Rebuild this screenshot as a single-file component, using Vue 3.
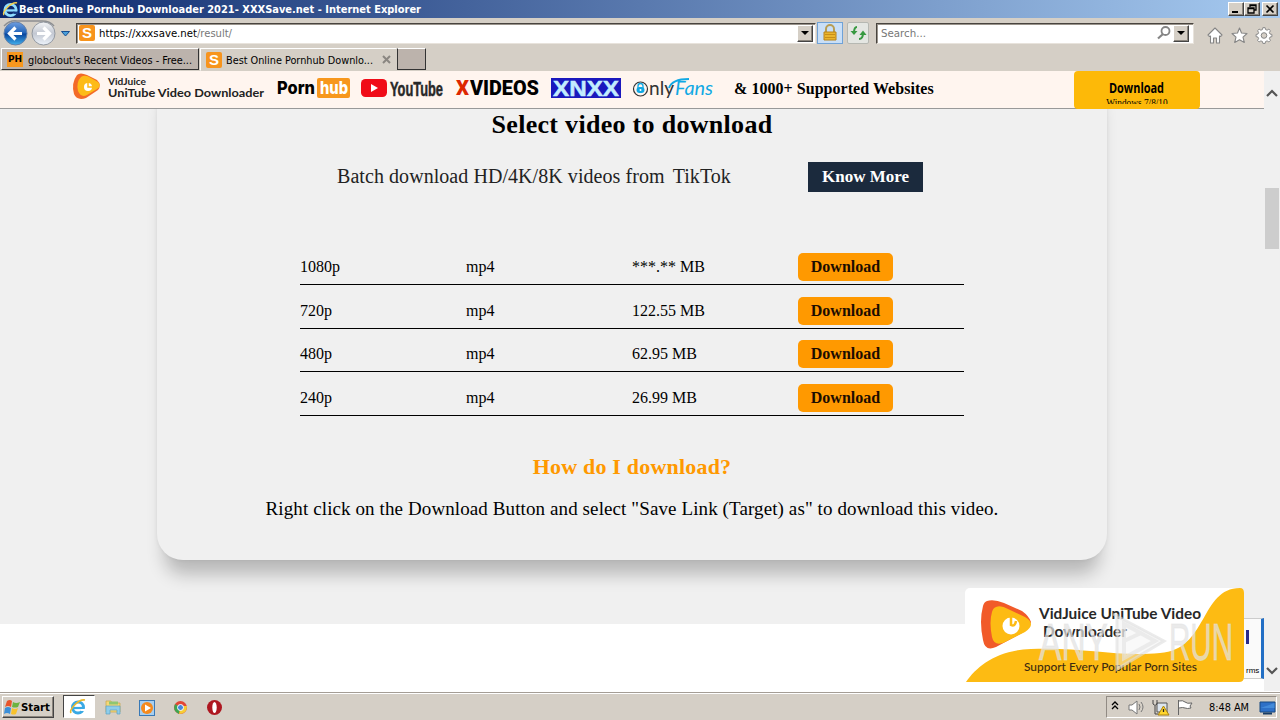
<template>
  <div class="screen">
    <header class="titlebar">
      <svg class="ie" viewBox="0 0 18 18">
        <circle cx="9" cy="9.5" r="6" fill="none" stroke="#8edcff" stroke-width="3" />
        <path d="M4 10h11" stroke="#8edcff" stroke-width="2.4" />
        <path d="M12 11.2h5v2.5h-5z" fill="#173c86" />
        <path d="M2 15C0 12 9 1 16 2" fill="none" stroke="#f7cf4e" stroke-width="1.5" />
      </svg>
      <svg class="title-text" width="404" height="17">
        <text x="0" y="12" textLength="402" lengthAdjust="spacingAndGlyphs">Best Online Pornhub Downloader 2021- XXXSave.net - Internet Explorer</text>
      </svg>
      <div class="win-buttons">
        <span class="bevel win"><svg viewBox="0 0 14 12"><path d="M3 9h6" stroke="#000" stroke-width="2" /></svg></span>
        <span class="bevel win"><svg viewBox="0 0 14 12"><path d="M5 4V2h6v5H9M5 2.5h6M3 5h6v5H3zM3 5.5h6" fill="none" stroke="#000" stroke-width="1.3" /></svg></span>
        <span class="bevel win last"><svg viewBox="0 0 14 12"><path d="M3.5 2.5l7 7M10.5 2.5l-7 7" stroke="#000" stroke-width="1.7" /></svg></span>
      </div>
    </header>

    <div class="toolbar">
      <svg class="nav" width="74" height="30" viewBox="0 0 74 30">
        <defs>
          <linearGradient id="back" x1="0" y1="0" x2="0" y2="1">
            <stop offset="0" stop-color="#6f9ee0" /><stop offset=".48" stop-color="#2163b8" />
            <stop offset=".52" stop-color="#08449c" /><stop offset="1" stop-color="#43b2ee" />
          </linearGradient>
          <linearGradient id="fwd" x1="0" y1="0" x2="0" y2="1">
            <stop offset="0" stop-color="#f4f5f7" /><stop offset=".5" stop-color="#c3c8d2" /><stop offset="1" stop-color="#edf3fa" />
          </linearGradient>
        </defs>
        <path d="M4 8Q10 2 17 3H42Q50 3 54 8" fill="none" stroke="#8d8f92" stroke-width="1.5" />
        <circle cx="15.5" cy="15.5" r="11.5" fill="url(#back)" stroke="#6681a9" />
        <circle cx="43.5" cy="15.5" r="11.5" fill="url(#fwd)" stroke="#9298a1" />
        <path d="M22 15.5H10M15.500 9.500l-6 6 6 6" fill="none" stroke="#fff" stroke-width="3.200" />
        <path d="M37 15.500H49M43.500 9.500l6 6-6 6" fill="none" stroke="#fff" stroke-width="3.200" />
        <path d="M61.500 13.500h8l-4 4.500z" fill="#4aa0da" stroke="#174f91" />
      </svg>
      <div class="field address">
        <span class="s-icon">S</span>
        <svg class="url" width="140" height="18">
          <text x="0" y="13" textLength="98" lengthAdjust="spacingAndGlyphs">https://xxxsave.net</text>
          <text x="98" y="13" class="dim" textLength="35" lengthAdjust="spacingAndGlyphs">/result/</text>
        </svg>
        <span class="bevel drop"></span>
      </div>
      <span class="tool lock">
        <svg width="16" height="18" viewBox="0 0 16 18">
          <path d="M4 8V5a4 4 0 0 1 8 0v3" fill="none" stroke="#b79d54" stroke-width="2" />
          <path d="M2 8h12v8H2z" fill="#eab52d" stroke="#b8821b" /><path d="M3 10.500h10M3 13.500h10" stroke="#c88e18" />
        </svg>
      </span>
      <span class="tool refresh">
        <svg width="18" height="18" viewBox="0 0 18 18" fill="none" stroke="#379940" stroke-width="2">
          <path d="M8 3Q5 3 5 9" /><path d="M1.500 7h7L5 11z" fill="#379940" stroke="none" />
          <path d="M10 15q4 0 4-6" /><path d="M10.500 11h7L14 6.500z" fill="#379940" stroke="none" />
        </svg>
      </span>
      <div class="field search">
        <svg class="url" width="60" height="18"><text x="0" y="13" class="dim" textLength="45" lengthAdjust="spacingAndGlyphs">Search...</text></svg>
        <svg class="glass" width="15" height="16" viewBox="0 0 15 16"><circle cx="8.500" cy="6" r="4" fill="none" stroke="#858585" stroke-width="1.800" /><path d="M6 9l-5 4.500" stroke="#858585" stroke-width="2.200" /></svg>
        <span class="bevel drop"></span>
      </div>
      <svg class="tools" width="70" height="20" viewBox="0 0 70 20">
        <g fill="#fff" stroke="#858585" stroke-width="1.100" stroke-linejoin="round">
          <path d="M3 10l7-7 7 7-1.500 1.500L14.500 11v7h-3v-5h-3v5h-3v-7l-1 .5z" />
          <path d="M34.500 3l2 5 5.500.5-4 3.700 1.300 5.300-4.800-2.800-4.800 2.800 1.300-5.300-4-3.700 5.500-.5z" />
          <path transform="translate(59 10.500) scale(.87) translate(-59 -11)" d="M57.700 2h2.600l.5 2.200 1.800.7 2-1.200 1.800 1.800-1.200 2 .7 1.800 2.200.5v2.500l-2.200.5-.7 1.800 1.200 2-1.800 1.800-2-1.200-1.800.7-.5 2.200h-2.600l-.5-2.200-1.800-.7-2 1.200-1.800-1.800 1.200-2-.7-1.800-2.200-.5V9.800l2.200-.5.7-1.800-1.200-2 1.800-1.800 2 1.200 1.800-.7z" />
        </g>
        <circle cx="59" cy="10.500" r="2.800" fill="#d5cfc6" stroke="#858585" />
      </svg>
    </div>

    <nav class="tabs">
      <div class="tab first">
        <span class="ph">PH</span>
        <svg width="168" height="18"><text x="0" y="13" textLength="164" lengthAdjust="spacingAndGlyphs">globclout's Recent Videos - Free...</text></svg>
      </div>
      <div class="tab active">
        <span class="s-icon">S</span>
        <svg width="148" height="18"><text x="0" y="13" textLength="147" lengthAdjust="spacingAndGlyphs">Best Online Pornhub Downlo...</text></svg>
        <svg class="close" width="9" height="9" viewBox="0 0 9 9"><path d="M1 1l7 7M8 1L1 8" stroke="#8a8681" stroke-width="2" /></svg>
      </div>
      <div class="tab blank"></div>
    </nav>

    <main class="page">
      <div class="view">
        <div class="banner">
          <svg class="brands" width="660" height="37" viewBox="0 0 660 37">
            <path d="M5 4Q8 1 15 4L25 9Q30 14 26 19L14 27Q5 30 2 23Q-1 12 5 4Z" fill="#f36a28" />
            <path d="M9 6Q13 3 19 7L26 11Q30 15 25 18L15 24Q9 27 6 20Q4 11 9 6Z" fill="#fdbb18" />
            <circle cx="16" cy="16" r="4" fill="#fff" /><path d="M16 11v5h4" fill="none" stroke="#fdbb18" stroke-width="1.500" />
            <g class="lato" fill="#222">
              <text x="36" y="14" font-size="10" textLength="38" lengthAdjust="spacingAndGlyphs">VidJuice</text>
              <text x="36" y="25.500" font-size="12" textLength="156" lengthAdjust="spacingAndGlyphs">UniTube Video Downloader</text>
            </g>
            <g class="logo-sans">
              <text class="heavy" x="205" y="23" font-size="18" textLength="38" lengthAdjust="spacingAndGlyphs">Porn</text>
              <rect x="245" y="7" width="33" height="20" rx="2" fill="#f7971d" />
              <text class="heavy" x="248" y="23" font-size="18" fill="#fff" textLength="28" lengthAdjust="spacingAndGlyphs">hub</text>
              <rect x="289" y="8" width="26" height="18" rx="4.500" fill="#f00c18" />
              <path d="M299 13v8l7-4z" fill="#fff" />
              <text x="318" y="24.500" font-size="20" fill="#282828" stroke="#282828" stroke-width=".5" textLength="53" lengthAdjust="spacingAndGlyphs">YouTube</text>
              <text class="black" x="384" y="24" font-size="20" fill="#de2600" textLength="13" lengthAdjust="spacingAndGlyphs">X</text>
              <text class="black" x="398" y="24" font-size="20" textLength="69" lengthAdjust="spacingAndGlyphs">VIDEOS</text>
              <rect x="479" y="7" width="70" height="20" fill="#1b18bd" />
              <text x="481" y="25" font-size="22" fill="#c3ecff" stroke="#c3ecff" stroke-width=".5" textLength="66" lengthAdjust="spacingAndGlyphs">XNXX</text>
            </g>
            <circle cx="568.500" cy="18" r="7" fill="none" stroke="#333" stroke-width="1.200" />
            <path d="M566 17v-2a2.500 2.500 0 0 1 5 0v2" fill="none" stroke="#11a8e4" stroke-width="1.300" />
            <rect x="564.500" y="16" width="8" height="6" rx="3" fill="#11a8e4" /><circle cx="568.500" cy="19" r="1" fill="#fff" />
            <text class="only" x="577" y="24" font-size="19" fill="#333" textLength="25" lengthAdjust="spacingAndGlyphs">nly</text>
            <text class="fans" x="603" y="24" font-size="20" fill="#12a9e4" textLength="38" lengthAdjust="spacingAndGlyphs">Fans</text>
            <path d="M597 17q3-9 20-9" fill="none" stroke="#12a9e4" stroke-width="2" />
          </svg>
          <strong class="supported">&amp; 1000+ Supported Websites</strong>
          <div class="top-download">
            <svg width="56" height="20"><text x="0" y="14" textLength="55" lengthAdjust="spacingAndGlyphs">Download</text></svg>
            <span>Windows 7/8/10</span>
          </div>
        </div>

        <div class="backdrop">
          <section class="card">
            <h1>Select video to download</h1>
            <div class="batch">
              <p>Batch download HD/4K/8K videos from <span>TikTok</span></p>
              <a class="know">Know More</a>
            </div>
            <div class="rows">
              <div v-for="file in files" :key="file.quality" class="row">
                <span>{{ file.quality }}</span>
                <span>mp4</span>
                <span>{{ file.size }}</span>
                <a class="download">Download</a>
              </div>
            </div>
            <h2>How do I download?</h2>
            <p class="hint">Right click on the Download Button and select "Save Link (Target) as" to download this video.</p>
          </section>
        </div>

        <div class="captcha"><b></b><span>rms</span></div>
        <svg class="promo" width="280" height="95" viewBox="0 0 280 95">
          <rect width="279" height="94" rx="5" fill="#fff" />
          <path d="M1 94C12 78 32 62 66 61C120 59 150 69 195 65C243 62 235 0 275 0Q279 0 279 5V89Q279 94 274 94Z" fill="#fdbb13" />
          <path d="M22 13Q29 11 39 15L57 23Q64 28 66 34Q64 41 57 45L31 59Q20 64 18 52Q14 33 18 18Q19 14 22 13Z" fill="#f15a29" />
          <path d="M31 19Q36 17 43 21L60 29Q72 36 60 44L38 55Q29 58 27 49Q24 34 27 24Q28 20 31 19Z" fill="#fdbb13" />
          <circle cx="46" cy="38" r="8.500" fill="#fff" /><path d="M38 28h8v9q4 2 5-4" fill="none" stroke="#fdbb13" stroke-width="2.500" />
          <g class="promo-title" fill="#282828">
            <text x="74" y="31" textLength="162" lengthAdjust="spacingAndGlyphs">VidJuice UniTube Video</text>
            <text x="78" y="49" textLength="84" lengthAdjust="spacingAndGlyphs">Downloader</text>
          </g>
          <text class="promo-sub" x="59" y="83" textLength="173" lengthAdjust="spacingAndGlyphs">Support Every Popular Porn Sites</text>
        </svg>
        <svg class="watermark" width="200" height="65" viewBox="0 0 200 65">
          <g fill="#e2e2e2" fill-opacity=".72" stroke="#e2e2e2" stroke-opacity=".5">
            <text x="3" y="50" textLength="69" lengthAdjust="spacingAndGlyphs">ANY</text>
            <text x="133" y="50" textLength="64" lengthAdjust="spacingAndGlyphs">RUN</text>
          </g>
          <path d="M77 4l51 27-47 28V4" fill="#eee" fill-opacity=".4" stroke="#ddd" stroke-opacity=".6" stroke-width="3" />
          <path d="M88 14v34l31-17zM88 31l17-8" fill="#fff" fill-opacity=".15" stroke="#e4e4e4" stroke-opacity=".65" stroke-width="4" />
        </svg>
      </div>

      <div class="scrollbar">
        <svg width="12" height="8" viewBox="0 0 12 8"><path d="M1 7l5-5 5 5" fill="none" stroke="#555" stroke-width="2.200" /></svg>
        <span class="thumb"></span>
        <svg width="12" height="8" viewBox="0 0 12 8"><path d="M1 1l5 5 5-5" fill="none" stroke="#555" stroke-width="2.200" /></svg>
      </div>
    </main>

    <footer class="taskbar">
      <div class="bevel start">
        <svg width="16" height="16" viewBox="0 0 16 16">
          <path d="M3 2q3-2 5 0L7 8Q4 6 1 8z" fill="#e9552b" /><path d="M9 3q3 2 7 0l-2 5q-3 1-6 0z" fill="#6cb33f" />
          <path d="M1 9q3-2 6 0l-1 6q-3-2-6 0z" fill="#3c8fd8" /><path d="M8 9q3 2 6 0l-2 6q-2 1-5 0z" fill="#f8c22c" />
        </svg>
        <svg width="30" height="16"><text x="0" y="12" textLength="29" lengthAdjust="spacingAndGlyphs">Start</text></svg>
      </div>
      <div class="task-ie">
        <svg width="18" height="18" viewBox="0 0 18 18">
          <circle cx="9" cy="9.500" r="5.500" fill="none" stroke="#3aa9e4" stroke-width="3" />
          <path d="M4 10h11" stroke="#3aa9e4" stroke-width="2.200" /><path d="M12 11h5v2h-5z" fill="#fff" />
          <path d="M2 15C0 12 9 1 16 2" fill="none" stroke="#eab92d" stroke-width="1.600" />
        </svg>
      </div>
      <svg class="launch" width="120" height="20" viewBox="0 0 120 20">
        <path d="M2 4h5l1 2h8v9H2z" fill="#f4d878" stroke="#c9a545" stroke-width=".7" />
        <path d="M5 4.500h9v3H5z" fill="#8fc670" /><path d="M2 9h14v8h-3v-4H6v4H2z" fill="#8ecdea" stroke="#5da2c3" stroke-width=".7" />
        <rect x="35.500" y="3.500" width="15" height="15" fill="#a7cff0" stroke="#3979b6" />
        <circle cx="43" cy="11" r="6" fill="#f58a1d" /><path d="M41 7.500v7l6-3.500z" fill="#fff" />
        <circle cx="76.500" cy="10.500" r="6.500" fill="#e24635" />
        <path d="M76.500 10.500L71 7q-3 7 4 10z" fill="#3da650" /><path d="M76.500 10.500L75 17q8 0 8-8h-6z" fill="#f7ce36" />
        <circle cx="76.500" cy="10.500" r="3" fill="#4687dc" stroke="#fff" />
        <circle cx="110.500" cy="10.500" r="7.500" fill="#ae1720" /><ellipse cx="110.500" cy="10.500" rx="2.200" ry="5.500" fill="#fff" />
      </svg>
      <div class="tray">
        <svg width="90" height="20" viewBox="0 0 90 20">
          <path d="M5 8l3-3 3 3M5 12l3-3 3 3" fill="none" stroke="#000" stroke-width="1.300" />
          <path d="M22 8h3l5-4v13l-5-4h-3z" fill="#fff" stroke="#777" />
          <path d="M32 7q2 3 0 6M34 5q4 5 0 10" fill="none" stroke="#777" />
          <path d="M50 6h10v9H50z" fill="#dce5ef" stroke="#555" /><path d="M46 3v4q2 3 4 0V3M48 9v8h3" fill="none" stroke="#444" />
          <path d="M56.500 9l5.500 9H51z" fill="#ffd52d" stroke="#a98210" /><path d="M56.500 12v3" stroke="#222" stroke-width="1.300" />
          <path d="M71.500 3v15M72 4q4-1 6 1t7 1l-2 3 1 2q-4 1-6 0t-6 0" fill="#fff" stroke="#666" />
        </svg>
        <svg class="clock" width="42" height="18"><text x="0" y="13" textLength="40" lengthAdjust="spacingAndGlyphs">8:48 AM</text></svg>
        <svg class="desktop" width="17" height="16" viewBox="0 0 17 16"><path d="M1 3h15v10H1z" fill="#2e70c7" stroke="#174981" /><path d="M1.500 9l14-5v5z" fill="#438ad9" /><path d="M4 14.500h9" stroke="#173c65" stroke-width="2" /></svg>
      </div>
    </footer>
  </div>
</template>

<script setup>
const files = [
  { quality: '1080p', size: '***.** MB' },
  { quality: '720p', size: '122.55 MB' },
  { quality: '480p', size: '62.95 MB' },
  { quality: '240p', size: '26.99 MB' }
]
</script>

<style>
body {
  overflow: hidden;
}
</style>

<style scoped>
* {
  box-sizing: border-box;
}

.screen {
  width: 1280px;
  height: 720px;
  display: flex;
  flex-direction: column;
  overflow: hidden;
  background: #d5cfc6;
  font-family: 'DejaVu Sans Condensed', 'DejaVu Sans', sans-serif;
  font-size: 11px;
}

svg {
  display: block;
  flex: none;
  overflow: visible;
}

.bevel {
  background: #d5cfc6;
  border: 1px solid;
  border-color: #fff #444 #444 #fff;
  box-shadow: inset -1px -1px #8b857d;
}

.titlebar {
  height: 18px;
  flex: none;
  display: flex;
  align-items: center;
  padding: 0 2px;
  background: linear-gradient(90deg, #0c286c, #a6caf0);
}

.ie {
  width: 17px;
  height: 17px;
}

.title-text {
  fill: #fff;
  font-weight: bold;
}

.win-buttons {
  display: flex;
  margin-left: auto;
}

.win {
  width: 16px;
  height: 14px;
}

.win svg {
  width: 14px;
  height: 12px;
}

.last {
  margin-left: 2px;
}

.toolbar {
  height: 30px;
  flex: none;
  display: flex;
  align-items: center;
}

.field {
  height: 21px;
  display: flex;
  align-items: center;
  background: #fff;
  border: 1px solid;
  border-color: #48443f #e8e3dc #e8e3dc #48443f;
  box-shadow: inset 1px 1px #99938b;
}

.address {
  width: 740px;
  margin-left: 2px;
  padding: 0 2px;
}

.s-icon {
  width: 16px;
  height: 16px;
  flex: none;
  background: #f7941d;
  border-radius: 2px;
  color: #fff;
  font: bold 15px/16px 'Liberation Sans', sans-serif;
  text-align: center;
}

.url {
  margin-left: 4px;
}

.dim {
  fill: #777;
}

.drop {
  width: 16px;
  height: 17px;
  margin-left: auto;
  display: flex;
  align-items: center;
  justify-content: center;
}

.drop::after {
  content: '';
  border: 4px solid transparent;
  border-top-color: #000;
  border-bottom: 0;
}

.tool {
  height: 22px;
  display: flex;
  align-items: center;
  justify-content: center;
}

.lock {
  width: 26px;
  margin-left: 1px;
  background: #c9dff7;
  border: 1px solid #6fa2d7;
}

.refresh {
  width: 22px;
  margin-left: 4px;
  background: #e4e6e2;
  border: 1px solid #b6b8b2;
  border-radius: 2px;
}

.search {
  width: 318px;
  margin-left: 7px;
  padding-right: 4px;
}

.glass {
  margin-left: auto;
}

.search .drop {
  margin-left: 1px;
}

.tools {
  margin: 4px 0 0 11px;
}

.tabs {
  height: 23px;
  flex: none;
  display: flex;
}

.tab {
  height: 22px;
  display: flex;
  align-items: center;
  border: 1px solid;
  border-color: #fff #333 #333 #fff;
}

.first {
  width: 198px;
  margin-left: 1px;
  padding-left: 5px;
  background: #bcb3ac;
}

.first svg {
  margin-top: 2px;
}

.ph {
  width: 16px;
  height: 15px;
  margin-right: 5px;
  flex: none;
  background: #f7971d;
  font: bold 9px/15px 'DejaVu Sans', sans-serif;
  text-align: center;
}

.active {
  width: 197px;
  height: 23px;
  margin-left: 1px;
  padding-left: 5px;
  border-color: #fff #d5cfc6 #d5cfc6 #fff;
}

.active > svg:nth-child(2) {
  margin-left: 4px;
}

.close {
  margin-left: 8px;
}

.blank {
  width: 29px;
  background: #bcb3ac;
  border-left-color: #333;
}

.page {
  height: 621px;
  flex: none;
  display: flex;
  border-bottom: 1px solid #fff;
}

.view {
  position: relative;
  width: 1264px;
  height: 620px;
  background: #fff;
}

.banner {
  position: relative;
  z-index: 2;
  height: 38px;
  display: flex;
  background: #fff5ef;
  border-bottom: 1px solid #999;
}

.brands {
  margin-left: 72px;
}

.lato {
  font-family: Lato, sans-serif;
  font-weight: bold;
}

.logo-sans {
  font-family: 'Liberation Sans', sans-serif;
  font-weight: bold;
}

.heavy {
  font-family: Inter, sans-serif;
  font-weight: 800;
}

.black {
  font-family: Roboto, sans-serif;
  font-weight: 900;
}

.only {
  font-family: Lato, sans-serif;
  font-weight: 400;
}

.fans {
  font-family: Lato, sans-serif;
  font-style: italic;
}

.supported {
  margin-left: 2px;
  padding-top: 8px;
  font: bold 16px/20px 'Liberation Serif', serif;
  letter-spacing: 0.04px;
  white-space: nowrap;
}

.top-download {
  width: 126px;
  height: 38px;
  margin-left: auto;
  margin-right: 64px;
  padding-top: 8px;
  display: flex;
  flex-direction: column;
  align-items: center;
  background: #fdb908;
  border-radius: 4px;
  font-family: 'Open Sans', sans-serif;
  font-size: 15px;
  font-weight: bold;
}

.top-download span {
  height: 7px;
  margin-top: -2px;
  overflow: hidden;
  font: 9.3px/12px 'Liberation Serif', serif;
}

.backdrop {
  height: 515px;
  background: #f0f0f0;
  overflow: hidden;
}

.card {
  width: 950px;
  height: 491px;
  margin: -40px 0 0 157px;
  padding-top: 40px;
  border-radius: 26px;
  background: #f0f0f0;
  box-shadow: 0 22px 18px -8px rgba(0, 0, 0, 0.24), 0 0 4px rgba(0, 0, 0, 0.06);
  font-family: 'Liberation Serif', serif;
  text-align: center;
}

h1,
h2,
p {
  margin: 0;
  white-space: nowrap;
}

h1 {
  font-size: 26px;
  line-height: 32px;
  letter-spacing: 0.3px;
}

.batch {
  height: 30px;
  margin: 21px 184px 0 180px;
  display: flex;
  justify-content: space-between;
  font-size: 20px;
  line-height: 28px;
}

.batch p {
  color: #222;
  letter-spacing: 0.06px;
}

.batch span {
  margin-left: 3px;
}

.know {
  width: 115px;
  background: #1b2a3d;
  color: #fff;
  font-size: 17px;
  font-weight: bold;
  line-height: 29px;
}

.rows {
  width: 664px;
  margin: 49.4px 0 0 143px;
  font-size: 16px;
  text-align: left;
}

.row {
  height: 43.6px;
  display: grid;
  grid-template-columns: repeat(4, 166px);
  align-items: end;
  padding-bottom: 3px;
  border-bottom: 1px solid #000;
  line-height: 28px;
}

.download {
  width: 95px;
  height: 28px;
  background: #f90;
  border-radius: 5px;
  color: #1c0d00;
  font-weight: bold;
  text-align: center;
}

h2 {
  margin-top: 37.2px;
  color: #f90;
  font-size: 22px;
  line-height: 28px;
  letter-spacing: 0.2px;
}

.hint {
  margin-top: 15px;
  font-size: 19px;
  line-height: 26px;
  letter-spacing: 0.105px;
}

.captcha {
  position: absolute;
  top: 547px;
  right: 0;
  width: 30px;
  height: 61px;
  display: flex;
  flex-direction: column;
  justify-content: space-between;
  align-items: flex-start;
  padding: 11px 0 2px 11px;
  border: 1px solid #ccc;
  border-right: 3px solid #226fc5;
  background: #fafafa;
  font: 8px/10px 'Liberation Sans', sans-serif;
}

.captcha b {
  width: 3px;
  height: 14px;
  background: #2a2a8a;
}

.promo {
  position: absolute;
  left: 965px;
  top: 517px;
}

.promo-title {
  font: bold 15px Lato, sans-serif;
}

.promo-sub {
  font: 500 12px Lato, sans-serif;
  fill: #3e2b10;
}

.watermark {
  position: absolute;
  left: 1036px;
  top: 539px;
  font: 52px 'Liberation Sans', sans-serif;
}

.scrollbar {
  width: 16px;
  display: flex;
  flex-direction: column;
  align-items: center;
  padding: 18px 0 16px;
  background: #f0f0f0;
}

.thumb {
  width: 14px;
  height: 61px;
  margin: 91px 0 auto;
  background: #cdcdcd;
}

.taskbar {
  height: 28px;
  flex: none;
  display: flex;
  align-items: center;
  border-top: 1px solid #a49d95;
  box-shadow: inset 0 1px #fff;
}

.start {
  width: 52px;
  height: 22px;
  margin-left: 2px;
  display: flex;
  align-items: center;
  gap: 1px;
  padding-left: 1px;
  font-weight: bold;
}

.task-ie {
  width: 32px;
  height: 23px;
  margin-left: 9px;
  padding: 2px 5px;
  background: #fff;
  border: 1px solid;
  border-color: #444 #fff #fff #444;
}

.launch {
  margin-left: 9px;
}

.tray {
  width: 171px;
  height: 22px;
  margin-left: auto;
  margin-right: 3px;
  display: flex;
  align-items: center;
  border: 1px solid;
  border-color: #918b84 #fff #fff #918b84;
}

.clock {
  margin-left: 12px;
}

.desktop {
  margin-left: auto;
}
</style>
